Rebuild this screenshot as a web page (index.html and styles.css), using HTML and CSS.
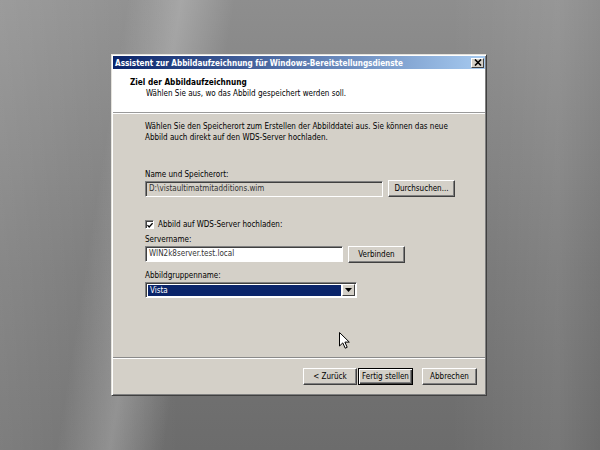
FILE: index.html
```html
<!DOCTYPE html>
<html lang="de">
<head>
<meta charset="utf-8">
<title>Assistent zur Abbildaufzeichnung</title>
<link rel="stylesheet" href="styles.css">
</head>
<body>
<div class="desktop">
  <div class="dialog">
    <div class="titlebar">
      <span class="title">Assistent zur Abbildaufzeichnung für Windows-Bereitstellungsdienste</span>
      <span class="close"><svg width="8" height="7" viewBox="0 0 8 7"><path d="M1 0.5 L7 6.5 M7 0.5 L1 6.5" stroke="#000" stroke-width="1.6"/></svg></span>
    </div>
    <div class="header">
      <div class="h-title">Ziel der Abbildaufzeichnung</div>
      <div class="h-sub">Wählen Sie aus, wo das Abbild gespeichert werden soll.</div>
    </div>
    <div class="content">
      <p class="intro">Wählen Sie den Speicherort zum Erstellen der Abbilddatei aus. Sie können das neue<br>Abbild auch direkt auf den WDS-Server hochladen.</p>
      <div class="label l-name">Name und Speicherort:</div>
      <div class="row">
        <div class="field disabled w-path">D:\vistaultimatmitadditions.wim</div>
        <button class="btn b-browse">Durchsuchen...</button>
      </div>
      <div class="check-row">
        <span class="checkbox"><svg width="7" height="7" viewBox="0 0 7 7"><path d="M0.5 3 L2.5 5.2 L6.5 0.8" fill="none" stroke="#000" stroke-width="1.5"/></svg></span>
        <span>Abbild auf WDS-Server hochladen:</span>
      </div>
      <div class="label l-server">Servername:</div>
      <div class="row">
        <div class="field w-server">WIN2k8server.test.local</div>
        <button class="btn b-connect">Verbinden</button>
      </div>
      <div class="label l-group">Abbildgruppenname:</div>
      <div class="combo">
        <span class="combo-sel">Vista</span>
        <span class="combo-btn"><svg width="7" height="4" viewBox="0 0 7 4"><path d="M0 0 H7 L3.5 4 Z" fill="#000"/></svg></span>
      </div>
    </div>
    <div class="footer">
      <button class="btn fbtn">&lt; Zurück</button>
      <button class="btn fbtn default">Fertig stellen</button>
      <button class="btn fbtn cancel">Abbrechen</button>
    </div>
  </div>
  <svg class="cursor" width="12" height="17" viewBox="0 0 12 17"><path d="M0.5 0.5 L0.5 14 L3.8 10.9 L6.2 16.2 L8.2 15.3 L5.9 10.1 L10.3 10.1 Z" fill="#fff" stroke="#000" stroke-width="1"/></svg>
</div>
</body>
</html>
```
FILE: styles.css
```css
html, body {
  margin: 0;
  padding: 0;
}
body {
  font-family: "DejaVu Sans Condensed", "Liberation Sans", sans-serif;
  font-size: 8px;
  color: #000;
}
.desktop {
  width: 600px;
  height: 450px;
  position: relative;
  overflow: hidden;
  background:
    linear-gradient(99deg, rgba(255,255,255,0) 19%, rgba(255,255,255,0.22) 27%, rgba(255,255,255,0) 35%),
    linear-gradient(to right, rgba(255,255,255,0.12), rgba(255,255,255,0) 30%, rgba(255,255,255,0) 75%, rgba(255,255,255,0.08) 93%, rgba(255,255,255,0) 100%),
    linear-gradient(to bottom, #8e8e8e, #777 60%, #6c6c6c);
}
.dialog {
  position: absolute;
  left: 111px;
  top: 54px;
  width: 376px;
  height: 342px;
  box-sizing: border-box;
  background: #d4d0c8;
  border: 1px solid;
  border-color: #e4e2dc #404040 #404040 #e4e2dc;
  padding: 1px;
  box-shadow: inset 1px 1px #fff, inset -1px -1px #808080;
  display: flex;
  flex-direction: column;
}
.titlebar {
  height: 13px;
  flex: none;
  background: linear-gradient(to right, #0a246a, #a6caf0);
  display: flex;
  align-items: center;
  justify-content: space-between;
  padding: 0 1px 0 2px;
  color: #fff;
  font-weight: bold;
  font-size: 8.1px;
  white-space: nowrap;
}
.close {
  width: 13px;
  height: 10px;
  box-sizing: border-box;
  background: #d4d0c8;
  border: 1px solid;
  border-color: #fff #404040 #404040 #fff;
  display: flex;
  align-items: center;
  justify-content: center;
}
.header {
  height: 44px;
  flex: none;
  box-sizing: border-box;
  background: #fff;
  border-bottom: 1px solid #9a9a9a;
  padding: 8px 0 0 17px;
  line-height: 11px;
}
.h-title {
  font-weight: bold;
  font-size: 8.2px;
}
.h-sub {
  padding-left: 16px;
}
.content {
  flex: 1;
  border-top: 1px solid #fff;
  padding: 7px 0 0 32px;
  line-height: 11px;
}
.intro {
  margin: 0;
}
.label {
  line-height: 11px;
}
.l-name { margin-top: 26px; }
.l-server { margin-top: 4px; }
.l-group { margin-top: 7px; }
.row {
  display: flex;
  align-items: flex-start;
  gap: 5px;
}
.field {
  height: 16px;
  margin-top: 1px;
  box-sizing: border-box;
  background: #fff;
  border: 1px solid;
  border-color: #808080 #fff #fff #808080;
  box-shadow: inset 1px 1px #404040;
  padding: 0 3px;
  line-height: 14px;
  color: #333;
  white-space: nowrap;
  overflow: hidden;
}
.field.disabled {
  background: #d4d0c8;
}
.w-path { width: 238px; }
.w-server { width: 198px; }
.btn {
  font-family: inherit;
  font-size: 8px;
  color: #000;
  background: #d4d0c8;
  height: 17px;
  box-sizing: border-box;
  border: 1px solid;
  border-color: #fff #404040 #404040 #fff;
  box-shadow: inset -1px -1px #808080;
  padding: 0;
  line-height: 14px;
  margin: 0;
}
.b-browse { width: 67px; }
.b-connect { width: 57px; margin-top: 1px; }
.check-row {
  margin-top: 22px;
  display: flex;
  align-items: center;
  gap: 4px;
  height: 11px;
}
.checkbox {
  width: 9px;
  height: 9px;
  box-sizing: border-box;
  background: #fff;
  border: 1px solid;
  border-color: #808080 #fff #fff #808080;
  box-shadow: inset 1px 1px #404040;
  display: flex;
  align-items: center;
  justify-content: center;
}
.checkbox svg { margin-left: 1px; margin-top: 1px; }
.combo {
  margin-top: 1px;
  width: 212px;
  height: 16px;
  box-sizing: border-box;
  background: #fff;
  border: 1px solid;
  border-color: #808080 #fff #fff #808080;
  box-shadow: inset 1px 1px #404040;
  padding: 2px 1px 1px 2px;
  display: flex;
  gap: 1px;
}
.combo-sel {
  flex: 1;
  background: #0a246a;
  color: #fff;
  padding-left: 2px;
  line-height: 11px;
}
.combo-btn {
  width: 13px;
  margin-top: -1px;
  box-sizing: border-box;
  background: #d4d0c8;
  border: 1px solid;
  border-color: #fff #404040 #404040 #fff;
  display: flex;
  align-items: center;
  justify-content: center;
}
.footer {
  height: 37px;
  flex: none;
  box-sizing: border-box;
  border-top: 1px solid #8a8a8a;
  box-shadow: inset 0 1px #fff;
  padding: 10px 8px 0 0;
  display: flex;
  justify-content: flex-end;
  align-items: flex-start;
  gap: 1px;
}
.fbtn { width: 55px; }
.fbtn:first-child { width: 54px; }
.default {
  border: 1px solid #000;
  box-shadow: inset 1px 1px #fff, inset -1px -1px #404040, inset -2px -2px #808080;
}
.cancel { margin-left: 8px; }
.cursor {
  position: absolute;
  left: 339px;
  top: 332px;
}
```
